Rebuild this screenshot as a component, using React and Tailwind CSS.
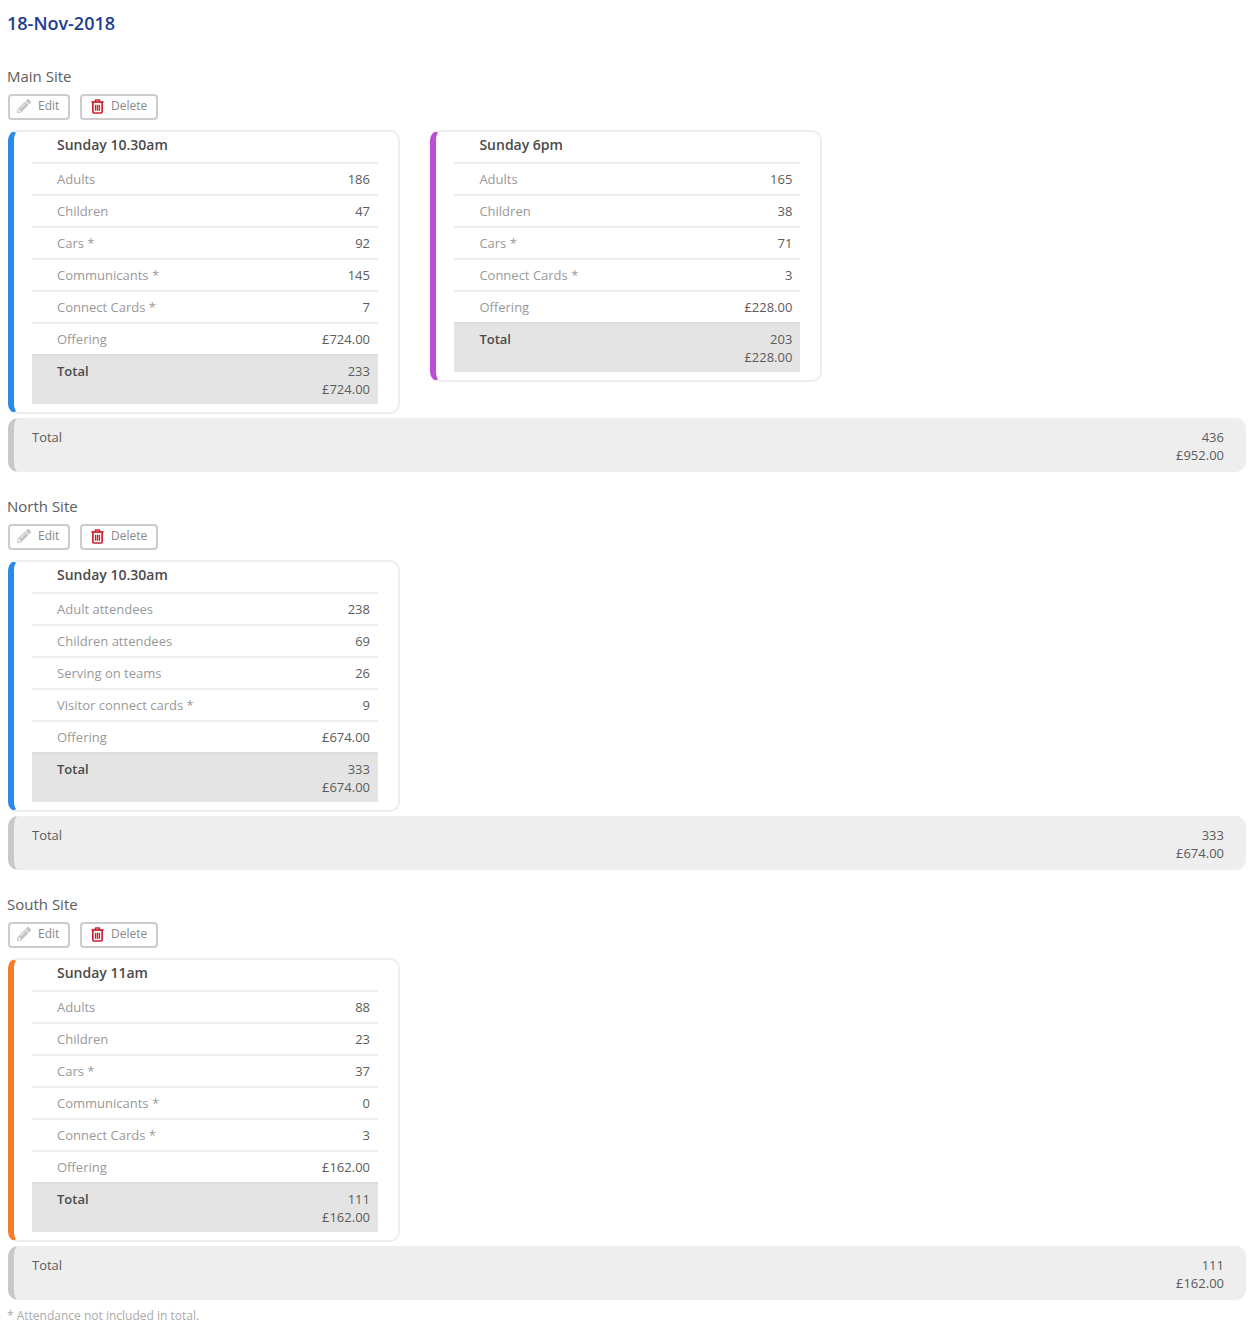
import React from 'react'
import { FaPencilAlt } from 'react-icons/fa'

const sites = [
  {
    name: 'Main Site',
    services: [
      {
        title: 'Sunday 10.30am',
        border: 'border-l-[#2b8ae6]',
        rows: [
          ['Adults', '186'],
          ['Children', '47'],
          ['Cars *', '92'],
          ['Communicants *', '145'],
          ['Connect Cards *', '7'],
          ['Offering', '£724.00'],
        ],
        total: ['233', '£724.00'],
      },
      {
        title: 'Sunday 6pm',
        border: 'border-l-[#b94fd6]',
        rows: [
          ['Adults', '165'],
          ['Children', '38'],
          ['Cars *', '71'],
          ['Connect Cards *', '3'],
          ['Offering', '£228.00'],
        ],
        total: ['203', '£228.00'],
      },
    ],
    total: ['436', '£952.00'],
  },
  {
    name: 'North Site',
    services: [
      {
        title: 'Sunday 10.30am',
        border: 'border-l-[#2b8ae6]',
        rows: [
          ['Adult attendees', '238'],
          ['Children attendees', '69'],
          ['Serving on teams', '26'],
          ['Visitor connect cards *', '9'],
          ['Offering', '£674.00'],
        ],
        total: ['333', '£674.00'],
      },
    ],
    total: ['333', '£674.00'],
  },
  {
    name: 'South Site',
    services: [
      {
        title: 'Sunday 11am',
        border: 'border-l-[#f57c28]',
        rows: [
          ['Adults', '88'],
          ['Children', '23'],
          ['Cars *', '37'],
          ['Communicants *', '0'],
          ['Connect Cards *', '3'],
          ['Offering', '£162.00'],
        ],
        total: ['111', '£162.00'],
      },
    ],
    total: ['111', '£162.00'],
  },
]

function TrashIcon() {
  return (
    <svg viewBox="0 0 14 16" className="mr-[7px] h-[15px] w-[13px] shrink-0 text-[#d0202e]" fill="none" stroke="currentColor">
      <path d="M4.2 3 L5 1 H9 L9.8 3" strokeWidth="1.5" />
      <path d="M0.5 3.2 H13.5" strokeWidth="1.9" />
      <path d="M2 3.5 V14 Q2 15 3 15 H11 Q12 15 12 14 V3.5" strokeWidth="1.8" />
      <path d="M5 6 V12.5 M9 6 V12.5" strokeWidth="1.6" />
      <path d="M7 6 V12.5" strokeWidth="1.2" />
    </svg>
  )
}

function ServiceCard({ service }) {
  return (
    <div className={`w-[392px] border-2 border-[#eeeeee] border-l-[6px] ${service.border} rounded-[10px] bg-white pl-[18px] pr-[20px] pb-2`}>
      <div className="h-[32px] border-b-2 border-[#eeeeee] pl-[25px] text-[14px] font-semibold leading-[26px] text-[#4a4a4a]">
        {service.title}
      </div>
      {service.rows.map((row, index) => (
        <div
          key={row[0]}
          className={`flex h-[32px] justify-between border-b-2 pl-[25px] pr-2 text-[13px] leading-[30px] ${index === service.rows.length - 1 ? 'border-[#dddddd]' : 'border-[#eeeeee]'}`}
        >
          <span className="text-[#999999]">{row[0]}</span>
          <span className="text-[#5c5c5c]">{row[1]}</span>
        </div>
      ))}
      <div className="flex h-[48px] justify-between bg-[#e4e4e4] pl-[25px] pr-2 pt-[6px] text-[13px] leading-[18px] text-[#5c5c5c]">
        <span className="font-semibold text-[#4a4a4a]">Total</span>
        <div className="text-right">
          <div>{service.total[0]}</div>
          <div>{service.total[1]}</div>
        </div>
      </div>
    </div>
  )
}

function Site({ site }) {
  return (
    <div className="mb-[24px]">
      <div className="-ml-px text-[15px] leading-[20px] text-[#5c5c5c]">{site.name}</div>
      <div className="mt-[8px] flex gap-[10px]">
        <button className="flex h-[26px] w-[62px] items-center rounded-[4px] border-2 border-[#cccccc] pb-[2px] pl-[7px] text-[12px] text-[#888888]">
          <FaPencilAlt className="mr-[7px] text-[14px] text-[#c4c4c4]" />
          Edit
        </button>
        <button className="flex h-[26px] w-[78px] items-center rounded-[4px] border-2 border-[#cccccc] pb-[2px] pl-[9px] text-[12px] text-[#888888]">
          <TrashIcon />
          Delete
        </button>
      </div>
      <div className="mt-[10px] flex items-start gap-[30.4px]">
        {site.services.map((service) => (
          <ServiceCard key={service.title} service={service} />
        ))}
      </div>
      <div className="mt-1 flex h-[54px] justify-between rounded-[10px] border-l-[6px] border-[#c8c8c8] bg-[#eeeeee] pl-[18px] pr-[22px] pt-[10px] text-[13px] leading-[18px] text-[#5c5c5c]">
        <span>Total</span>
        <div className="text-right">
          <div>{site.total[0]}</div>
          <div>{site.total[1]}</div>
        </div>
      </div>
    </div>
  )
}

export default function App() {
  return (
    <div className="min-h-[1336px] bg-white pl-2 pr-[10px] pt-[11px] font-['Open_Sans',sans-serif]">
      <h1 className="-ml-px mb-[30px] text-[18px] font-semibold leading-[25px] text-[#1d3d8f]">18-Nov-2018</h1>
      {sites.map((site) => (
        <Site key={site.name} site={site} />
      ))}
      <p className="-ml-px -mt-[16px] text-[12px] leading-[16px] text-[#aaaaaa]">* Attendance not included in total.</p>
    </div>
  )
}
